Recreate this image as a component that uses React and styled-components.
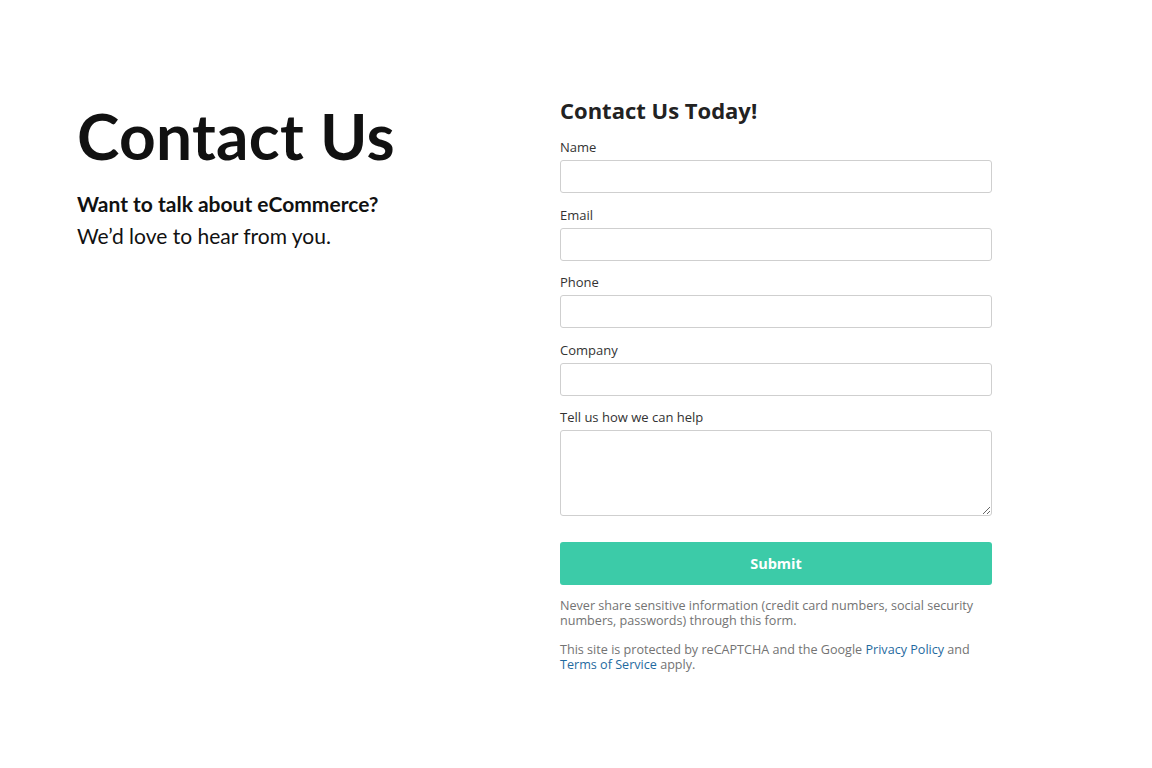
import React from 'react';
import styled, { createGlobalStyle } from 'styled-components';

const GlobalStyle = createGlobalStyle`
  body {
    margin: 0;
    background: #fff;
  }
`;

const Page = styled.div`
  display: flex;
  padding: 96px 0 0 77px;
`;

const Intro = styled.div`
  width: 483px;
  padding-top: 2px;
  font-family: Lato, 'Liberation Sans', sans-serif;
  color: #111;
`;

const Title = styled.h1`
  margin: 0;
  font-size: 64px;
  font-weight: 700;
  line-height: 76px;
  letter-spacing: 0.3px;
`;

const Lead = styled.p`
  margin: 14px 0 0;
  font-size: 21px;
  line-height: 32px;
  font-weight: ${(p) => (p.bold ? 700 : 400)};
  & + & {
    margin-top: 0;
  }
`;

const FormCol = styled.form`
  width: 432px;
  font-family: 'Open Sans', 'Liberation Sans', sans-serif;
`;

const FormTitle = styled.h2`
  margin: 0 0 15px;
  font-size: 22px;
  font-weight: 700;
  line-height: 28px;
  color: #222;
`;

const Field = styled.div`
  margin-bottom: 13.5px;
`;

const Label = styled.label`
  display: block;
  font-size: 13px;
  line-height: 17px;
  color: #333;
  margin-bottom: 4px;
`;

const Input = styled.input`
  display: block;
  box-sizing: border-box;
  width: 100%;
  height: 33px;
  border: 1px solid #cfcfcf;
  border-radius: 3px;
  background: #fff;
`;

const TextArea = styled.textarea`
  display: block;
  box-sizing: border-box;
  width: 100%;
  height: 86px;
  border: 1px solid #cfcfcf;
  border-radius: 3px;
  background: #fff;
`;

const Submit = styled.button`
  display: block;
  width: 100%;
  height: 43px;
  margin-top: 26px;
  border: none;
  border-radius: 3px;
  background: #3ccba8;
  color: #fff;
  font-family: 'Open Sans', 'Liberation Sans', sans-serif;
  font-size: 14.5px;
  font-weight: 700;
`;

const Note = styled.p`
  margin: ${(p) => (p.first ? '14px' : '15px')} 0 0;
  font-size: 12.6px;
  line-height: 14.5px;
  color: #737373;
`;

const Link = styled.a`
  color: #1f6aa0;
  text-decoration: none;
`;

const fields = ['Name', 'Email', 'Phone', 'Company'];

export default function App() {
  return (
    <>
      <GlobalStyle />
      <Page>
        <Intro>
          <Title>Contact Us</Title>
          <Lead bold>Want to talk about eCommerce?</Lead>
          <Lead>We’d love to hear from you.</Lead>
        </Intro>
        <FormCol onSubmit={(e) => e.preventDefault()}>
          <FormTitle>Contact Us Today!</FormTitle>
          {fields.map((f) => (
            <Field key={f}>
              <Label>{f}</Label>
              <Input type="text" />
            </Field>
          ))}
          <Field>
            <Label>Tell us how we can help</Label>
            <TextArea />
          </Field>
          <Submit type="submit">Submit</Submit>
          <Note first>
            Never share sensitive information (credit card numbers, social security
            numbers, passwords) through this form.
          </Note>
          <Note>
            This site is protected by reCAPTCHA and the Google{' '}
            <Link href="#">Privacy Policy</Link> and{' '}
            <Link href="#">Terms of Service</Link> apply.
          </Note>
        </FormCol>
      </Page>
    </>
  );
}
